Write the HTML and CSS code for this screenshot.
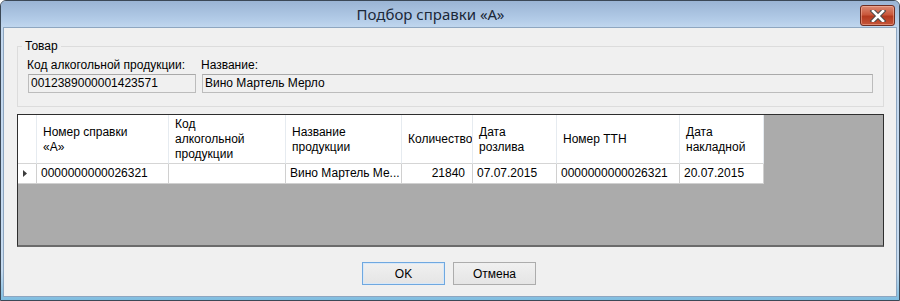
FILE: index.html
```html
<!DOCTYPE html>
<html lang="ru">
  <head>
    <meta charset="UTF-8" />
    <title>Подбор справки «А»</title>
    <link rel="stylesheet" href="styles.css">
  </head>
  <body>
    <div class="window">
      <div class="titlebar">
        <div class="title">Подбор справки «А»</div>
        <button class="close-button" title="Закрыть">
          <svg width="20" height="12" viewBox="0 0 20 12">
            <path d="M5 1 L15 11 M15 1 L5 11" stroke="#4a4a4a" stroke-width="4.6" stroke-linecap="square" />
            <path d="M5 1 L15 11 M15 1 L5 11" stroke="#ffffff" stroke-width="2.6" stroke-linecap="square" />
          </svg>
        </button>
      </div>

      <div class="client">
        <fieldset class="group">
          <legend>Товар</legend>
          <div class="fields">
            <div class="field field-code">
              <label>Код алкогольной продукции:</label>
              <div class="textbox">0012389000001423571</div>
            </div>
            <div class="field field-name">
              <label>Название:</label>
              <div class="textbox">Вино Мартель Мерло</div>
            </div>
          </div>
        </fieldset>

        <div class="grid">
          <div class="grid-table">
            <!-- header -->
            <div class="cell head rowhead"></div>
            <div class="cell head">Номер справки<br>«А»</div>
            <div class="cell head">Код<br>алкогольной<br>продукции</div>
            <div class="cell head">Название<br>продукции</div>
            <div class="cell head clip">Количество</div>
            <div class="cell head">Дата<br>розлива</div>
            <div class="cell head">Номер ТТН</div>
            <div class="cell head">Дата<br>накладной</div>

            <!-- row -->
            <div class="cell rowhead current">
              <svg width="4" height="7" viewBox="0 0 4 7"><path d="M0 0 L4 3.5 L0 7 Z" fill="#3c3c3c" /></svg>
            </div>
            <div class="cell">0000000000026321</div>
            <div class="cell"></div>
            <div class="cell">Вино Мартель Ме...</div>
            <div class="cell num">21840</div>
            <div class="cell">07.07.2015</div>
            <div class="cell">0000000000026321</div>
            <div class="cell">20.07.2015</div>
          </div>
        </div>

        <div class="buttons">
          <button class="btn btn-default">OK</button>
          <button class="btn">Отмена</button>
        </div>
      </div>
    </div>
  </body>
</html>
```

FILE: styles.css
```css
* {
  box-sizing: border-box;
}

body {
  margin: 0;
  font-family: "Liberation Sans", Arial, sans-serif;
  font-size: 12px;
  color: #000;
  background-color: #fff;
}

.window {
  width: 900px;
  height: 301px;
  display: flex;
  flex-direction: column;
  padding: 0 2px 3px 2px;
  border: 1px solid #3b4856;
  border-radius: 6px 6px 0 0;
  background: linear-gradient(#c2d7ee, #c6dbf0 90%, #7fbde0);
}

.titlebar {
  height: 26px;
  display: flex;
  align-items: flex-start;
  margin: 0 -2px;
  padding: 0 4px 0 0;
  border-radius: 5px 5px 0 0;
  background: linear-gradient(#9ab4d4, #b2cbe7 70%, #c0d6ee);
}

.title {
  flex: 1;
  text-align: center;
  font-family: "Noto Sans", "Open Sans", sans-serif;
  font-size: 15px;
  line-height: 27px;
  color: #1b2838;
}

.close-button {
  width: 35px;
  height: 21px;
  margin-top: 4px;
  padding: 0;
  display: flex;
  align-items: center;
  justify-content: center;
  border: 1px solid #6e2d22;
  border-radius: 3px;
  background: linear-gradient(#dc8a73, #c9583c 45%, #b43a1f 55%, #c5553a);
  box-shadow: inset 0 0 0 1px rgba(255, 200, 180, 0.45);
}

.client {
  flex: 1;
  display: flex;
  flex-direction: column;
  padding: 11px 12px 0 13px;
  background-color: #f0f0f0;
  border: 1px solid #8ea6c0;
}

/* group box */

.group {
  margin: 0;
  padding: 4px 10px 13px 10px;
  border: 1px solid #dcdcdc;
}

.group legend {
  margin-left: -6px;
  padding: 0 3px;
  line-height: 15px;
}

.fields {
  display: flex;
  gap: 6px;
}

.field {
  display: flex;
  flex-direction: column;
  gap: 1px;
}

.field label {
  line-height: 15px;
  margin-left: -1px;
  white-space: nowrap;
}

.field-code {
  width: 168px;
  flex-shrink: 0;
}

.field-name {
  flex: 1;
}

.textbox {
  height: 19px;
  line-height: 17px;
  padding-left: 2px;
  border: 1px solid #bcbcbc;
  border-top-color: #a9a9a9;
  background-color: #f0f0f0;
  white-space: nowrap;
}

/* data grid */

.grid {
  margin-top: 7px;
  height: 133px;
  border: 1px solid #2e2e2e;
  border-bottom: 2px solid #6b6b6b;
  background-color: #ababab;
}

.grid-table {
  display: grid;
  grid-template-columns: 19px 132px 117px 116px 71px 84px 123px 84px;
  grid-template-rows: 49px 20px;
  width: max-content;
}

.cell {
  display: flex;
  align-items: center;
  padding: 0 4px;
  line-height: 15px;
  background-color: #fff;
  border-right: 1px solid #d0d0d0;
  border-bottom: 1px solid #d0d0d0;
  white-space: nowrap;
  overflow: hidden;
}

.cell.head {
  padding: 1px 6px 0 6px;
  border-right-color: #e6ebf0;
  border-bottom-color: #d5d5d5;
}

.cell.clip {
  padding-right: 0;
}

.cell.num {
  justify-content: flex-end;
  padding-right: 7px;
}

.cell.rowhead {
  padding: 0 0 0 5px;
}

.cell.head.rowhead {
  padding: 0;
}

/* buttons */

.buttons {
  display: flex;
  justify-content: center;
  gap: 8px;
  margin-top: 15px;
  padding-right: 3px;
}

.btn {
  width: 83px;
  height: 23px;
  padding: 0;
  font-family: inherit;
  font-size: 12px;
  color: #000;
  border: 1px solid #acacac;
  border-radius: 0;
  background: linear-gradient(#f0f0f0, #e5e5e5);
}

.btn-default {
  border-color: #6fa8e0;
  box-shadow: inset 0 0 0 1px #d8e8f8;
}
```
